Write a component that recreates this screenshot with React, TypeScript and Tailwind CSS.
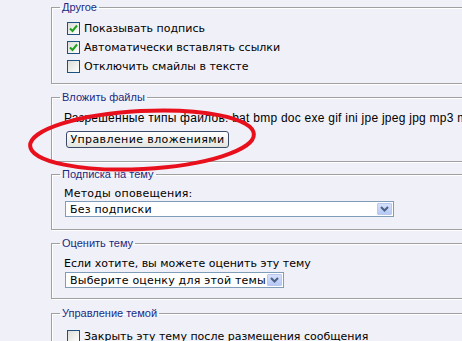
import React from 'react';

const Check = ({ checked }: { checked?: boolean }) => (
  <span className="w-[13px] h-[13px] shrink-0 border border-[#1c5180] bg-gradient-to-br from-[#dcdcd7] to-white flex items-center justify-center">
    {checked && (
      <svg width="9" height="9" viewBox="0 0 9 9">
        <path d="M1 4.5 L3.5 7 L8 1.5" fill="none" stroke="#21a121" strokeWidth="2" />
      </svg>
    )}
  </span>
);

const Group = ({ title, className, children }: { title: string; className: string; children: React.ReactNode }) => (
  <fieldset className={`border border-[#a0a0a0] shadow-[inset_1px_1px_0_#fff,1px_1px_0_#fff] ml-[51px] -mr-4 pl-[12px] text-[11px] leading-[13px] ${className}`}>
    <legend className="px-[2px] -ml-[4px] text-[#1a2a80] text-[11px] leading-[14px] font-['Liberation_Sans',sans-serif]">
      {title}
    </legend>
    {children}
  </fieldset>
);

const Select = ({ label, width }: { label: string; width: string }) => (
  <div className={`${width} h-[16px] bg-white border border-[#7f9db9] flex items-center justify-between pl-[4px] pr-[1px]`}>
    <span className="text-[11px] leading-[13px] text-black tracking-[0.2px] whitespace-nowrap overflow-hidden">{label}</span>
    <span className="w-[15px] h-[12px] shrink-0 bg-gradient-to-b from-[#d5e0fb] to-[#b6c9f5] border border-[#b8c8ee] rounded-[1px] flex items-center justify-center">
      <svg width="9" height="6" viewBox="0 0 9 6">
        <path d="M1 1 L4.5 4.5 L8 1" fill="none" stroke="#4d6185" strokeWidth="2" />
      </svg>
    </span>
  </div>
);

export default function App() {
  return (
    <div className="relative w-[462px] h-[341px] overflow-hidden bg-[#f0f0f8] font-['DejaVu_Sans',Verdana,sans-serif] text-black flex flex-col">
      <Group title="Другое" className="pb-[10px]">
        <div className="flex flex-col gap-[6px] pt-[8px]">
          <label className="flex items-center gap-[4px] ml-[3px]"><Check checked />Показывать подпись</label>
          <label className="flex items-center gap-[4px] ml-[3px]"><Check checked />Автоматически вставлять ссылки</label>
          <label className="flex items-center gap-[4px] ml-[3px]"><Check />Отключить смайлы в тексте</label>
        </div>
      </Group>

      <Group title="Вложить файлы" className="mt-[6px] pb-[13px]">
        <div className="pt-[7px] text-[12px] leading-[14px] tracking-[0.25px] font-['Liberation_Sans',sans-serif] whitespace-nowrap">
          Разрешенные типы файлов: bat bmp doc exe gif ini jpe jpeg jpg mp3 mp4 pdf png
        </div>
        <button className="block mt-[6px] ml-[2px] h-[17px] w-[163px] border border-[#3c4a6a] rounded-[3px] bg-gradient-to-b from-white to-[#e4e4de] text-[11px] leading-[13px] tracking-[0.4px]">
          Управление вложениями
        </button>
      </Group>

      <Group title="Подписка на тему" className="mt-[5px] pb-[12px]">
        <div className="pt-[6px] tracking-[0.2px]">Методы оповещения:</div>
        <div className="mt-[1px] ml-[1px]"><Select label="Без подписки" width="w-[329px]" /></div>
      </Group>

      <Group title="Оценить тему" className="mt-[6px] pb-[10px]">
        <div className="pt-[7px]">Если хотите, вы можете оценить эту тему</div>
        <div className="mt-[2px] ml-[1px]"><Select label="Выберите оценку для этой темы" width="w-[219px]" /></div>
      </Group>

      <Group title="Управление темой" className="mt-[7px] pb-[8px]">
        <div className="pt-[10px]">
          <label className="flex items-center gap-[4px] ml-[3px]"><Check />Закрыть эту тему после размещения сообщения</label>
        </div>
      </Group>

      <svg className="absolute left-0 top-0 pointer-events-none" width="462" height="341">
        <ellipse cx="142" cy="140" rx="112" ry="29" fill="none" stroke="#e8101c" strokeWidth="4" transform="rotate(-3 142 140)" />
      </svg>
    </div>
  );
}
